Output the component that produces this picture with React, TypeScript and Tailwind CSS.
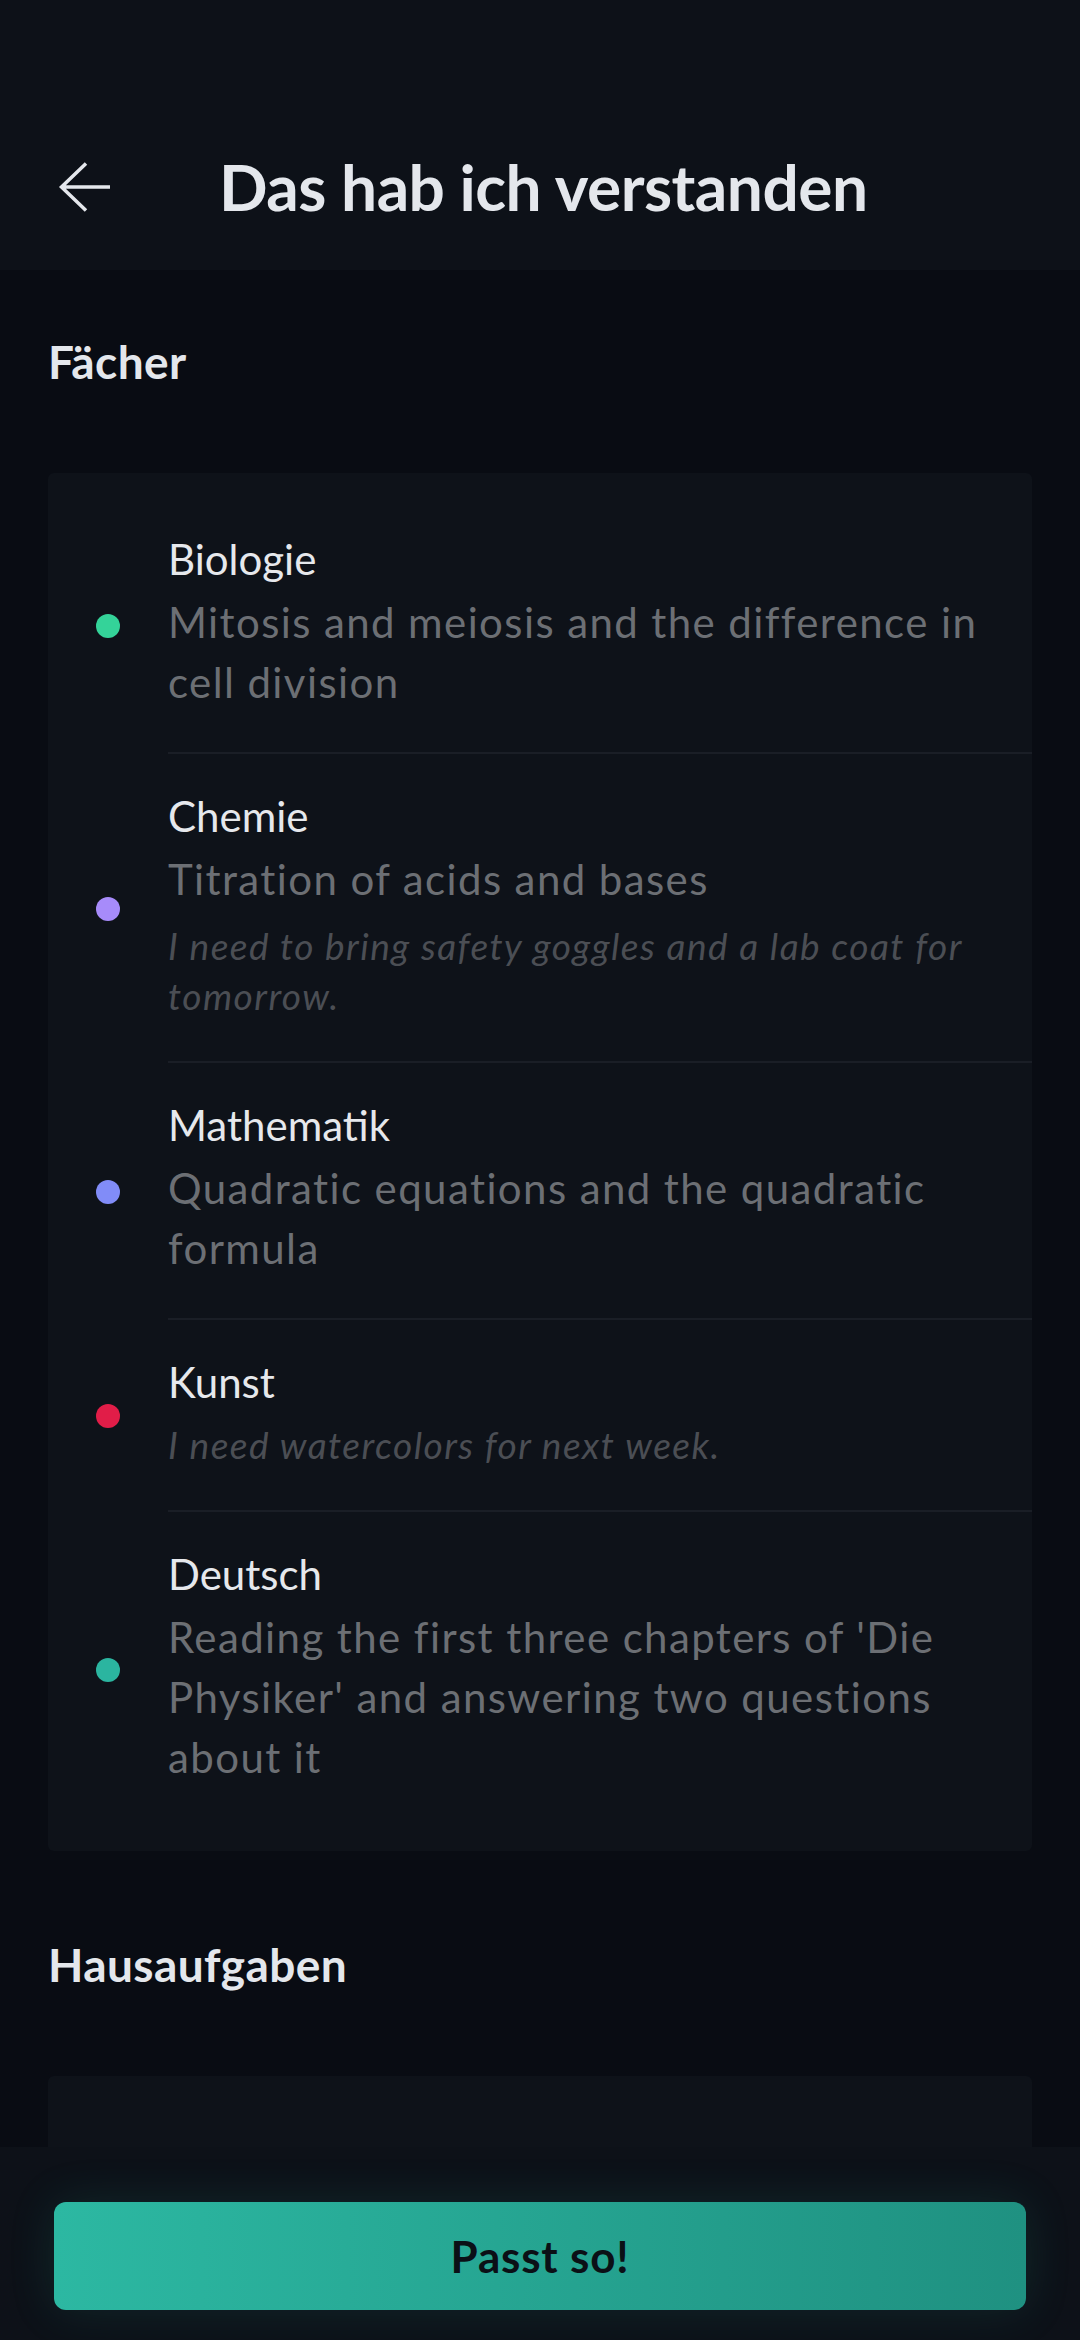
import React from 'react';

type Subject = {
  id: string;
  name: string;
  color: string;
  topic?: string;
  note?: string;
};

const subjects: Subject[] = [
  {
    id: 'bio',
    name: 'Biologie',
    color: 'bg-[#34d399]',
    topic: 'Mitosis and meiosis and the difference in cell division',
  },
  {
    id: 'chem',
    name: 'Chemie',
    color: 'bg-[#a78bfa]',
    topic: 'Titration of acids and bases',
    note: 'I need to bring safety goggles and a lab coat for tomorrow.',
  },
  {
    id: 'math',
    name: 'Mathematik',
    color: 'bg-[#818cf8]',
    topic: 'Quadratic equations and the quadratic formula',
  },
  {
    id: 'art',
    name: 'Kunst',
    color: 'bg-[#e11d48]',
    note: 'I need watercolors for next week.',
  },
  {
    id: 'de',
    name: 'Deutsch',
    color: 'bg-[#2bb5a0]',
    topic: "Reading the first three chapters of 'Die Physiker' and answering two questions about it",
  },
];

const homework: Subject[] = [
  {
    id: 'hw-math',
    name: 'Book page 55, exercise 3',
    color: 'bg-[#818cf8]',
    topic: 'Quadratic equations',
  },
];

function Row({ item, last }: { item: Subject; last: boolean }) {
  return (
    <div className="flex items-center">
      {/* colour dot */}
      <div className="w-[120px] shrink-0 pl-12">
        <span className={`block size-6 rounded-full ${item.color}`} />
      </div>

      <div
        className={
          last
            ? 'flex-1 pt-8 pb-10 pr-8'
            : 'flex-1 pt-8 pb-10 pr-8 border-b-2 border-[#1a1e26]'
        }
      >
        <p className="text-[42px] leading-[60px] text-[#e6e8ec]">{item.name}</p>
        {item.topic && (
          <p className="mt-[3px] text-[42px] leading-[60px] tracking-[1.4px] text-[#6c6f74]">
            {item.topic}
          </p>
        )}
        {item.note && (
          <p
            className={
              item.topic
                ? 'mt-[12px] text-[37px] leading-[50px] italic tracking-[1.5px] text-[#4b4e54]'
                : 'mt-[8px] text-[37px] leading-[50px] italic tracking-[1.5px] text-[#4b4e54]'
            }
          >
            {item.note}
          </p>
        )}
      </div>
    </div>
  );
}

export default function App() {
  return (
    <div className="relative h-[2340px] overflow-hidden bg-[#090c13] font-['Lato','Noto_Sans',sans-serif]">
      {/* Top bar */}
      <header className="h-[270px] bg-[#0d1118] pt-[104px]">
        <div className="flex h-[166px] items-center">
          <button className="w-[219px] shrink-0 pl-[58px] text-[#e4e7ec]">
            <svg width="52" height="50" viewBox="0 0 52 50" fill="none">
              <path d="M3 25H52M28 1.5L3.5 25L28 48.5" stroke="currentColor" strokeWidth="3.5" />
            </svg>
          </button>
          <h1 className="text-[64px] font-bold leading-none tracking-[-0.5px] text-[#e4e7ec]">
            Das hab ich verstanden
          </h1>
        </div>
      </header>

      <main className="px-12">
        <h2 className="pt-16 text-[46px] font-bold leading-[1.2] tracking-[0.4px] text-[#e4e7ec]">
          Fächer
        </h2>
        <div className="mt-[84px] rounded-md bg-[#0e1219] py-6">
          {subjects.map((s, i) => (
            <Row key={s.id} item={s} last={i === subjects.length - 1} />
          ))}
        </div>

        <h2 className="pt-[86px] text-[46px] font-bold leading-[1.2] tracking-[0.4px] text-[#e4e7ec]">
          Hausaufgaben
        </h2>
        <div className="mt-[84px] rounded-md bg-[#0e1219] py-6">
          {homework.map((s, i) => (
            <Row key={s.id} item={s} last={i === homework.length - 1} />
          ))}
        </div>
      </main>

      {/* Bottom action bar */}
      <div className="absolute bottom-0 left-0 right-0 h-[193px] bg-[#0d1118] px-[54px] pt-[55px]">
        <button className="flex h-[108px] w-full items-center justify-center rounded-[12px] bg-linear-to-r from-[#2cb8a2] to-[#1f9181] text-[44px] font-bold tracking-[0.8px] text-[#0b1016] shadow-[0_0_48px_rgba(38,176,155,0.14)]">
          Passt so!
        </button>
      </div>
    </div>
  );
}
